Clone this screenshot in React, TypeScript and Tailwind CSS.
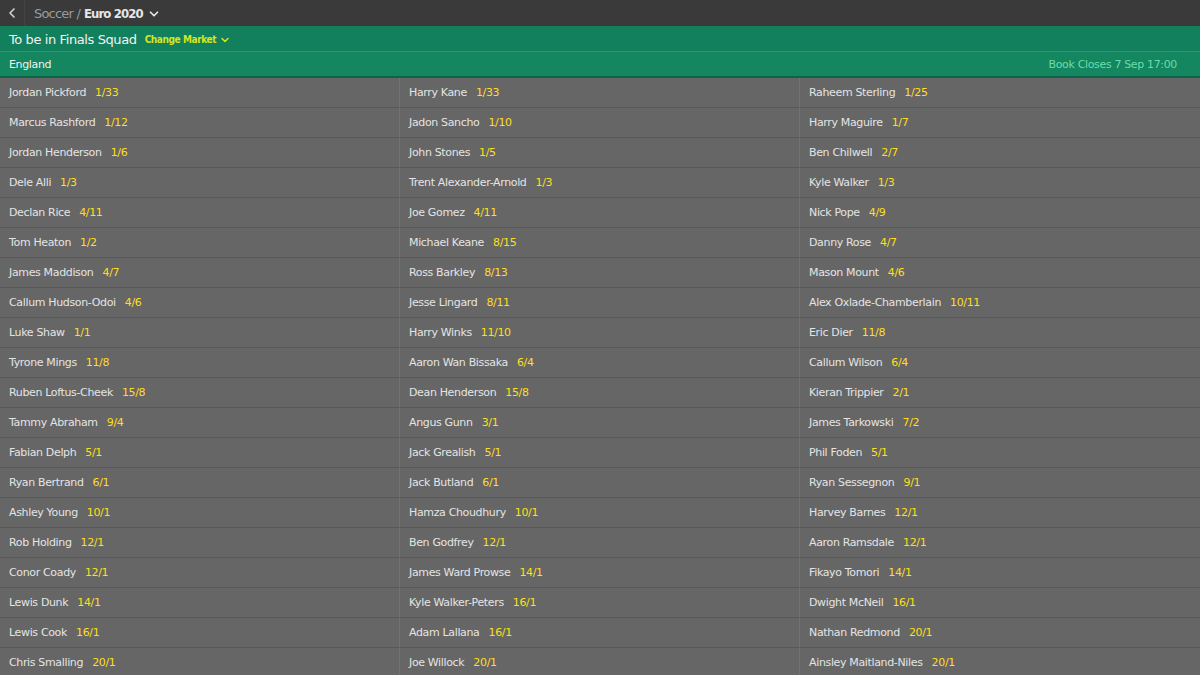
import { ChevronLeft, ChevronDown } from "lucide-react";

const rows: [string, string][][] = [
  [["Jordan Pickford", "1/33"], ["Harry Kane", "1/33"], ["Raheem Sterling", "1/25"]],
  [["Marcus Rashford", "1/12"], ["Jadon Sancho", "1/10"], ["Harry Maguire", "1/7"]],
  [["Jordan Henderson", "1/6"], ["John Stones", "1/5"], ["Ben Chilwell", "2/7"]],
  [["Dele Alli", "1/3"], ["Trent Alexander-Arnold", "1/3"], ["Kyle Walker", "1/3"]],
  [["Declan Rice", "4/11"], ["Joe Gomez", "4/11"], ["Nick Pope", "4/9"]],
  [["Tom Heaton", "1/2"], ["Michael Keane", "8/15"], ["Danny Rose", "4/7"]],
  [["James Maddison", "4/7"], ["Ross Barkley", "8/13"], ["Mason Mount", "4/6"]],
  [["Callum Hudson-Odoi", "4/6"], ["Jesse Lingard", "8/11"], ["Alex Oxlade-Chamberlain", "10/11"]],
  [["Luke Shaw", "1/1"], ["Harry Winks", "11/10"], ["Eric Dier", "11/8"]],
  [["Tyrone Mings", "11/8"], ["Aaron Wan Bissaka", "6/4"], ["Callum Wilson", "6/4"]],
  [["Ruben Loftus-Cheek", "15/8"], ["Dean Henderson", "15/8"], ["Kieran Trippier", "2/1"]],
  [["Tammy Abraham", "9/4"], ["Angus Gunn", "3/1"], ["James Tarkowski", "7/2"]],
  [["Fabian Delph", "5/1"], ["Jack Grealish", "5/1"], ["Phil Foden", "5/1"]],
  [["Ryan Bertrand", "6/1"], ["Jack Butland", "6/1"], ["Ryan Sessegnon", "9/1"]],
  [["Ashley Young", "10/1"], ["Hamza Choudhury", "10/1"], ["Harvey Barnes", "12/1"]],
  [["Rob Holding", "12/1"], ["Ben Godfrey", "12/1"], ["Aaron Ramsdale", "12/1"]],
  [["Conor Coady", "12/1"], ["James Ward Prowse", "14/1"], ["Fikayo Tomori", "14/1"]],
  [["Lewis Dunk", "14/1"], ["Kyle Walker-Peters", "16/1"], ["Dwight McNeil", "16/1"]],
  [["Lewis Cook", "16/1"], ["Adam Lallana", "16/1"], ["Nathan Redmond", "20/1"]],
  [["Chris Smalling", "20/1"], ["Joe Willock", "20/1"], ["Ainsley Maitland-Niles", "20/1"]],
];

const condensed = { fontFamily: "'DejaVu Sans Condensed', 'DejaVu Sans', sans-serif" };

export default function App() {
  return (
    <div
      className="w-[1200px] h-[675px] overflow-hidden bg-[#666666] text-[11px] tracking-[-0.35px]"
      style={{ fontFamily: "'DejaVu Sans', Verdana, sans-serif" }}
    >
      <div className="flex h-[26px] items-center bg-[#3a3a3a]">
        <div className="flex h-full w-[25px] items-center justify-center border-r border-[#444]">
          <ChevronLeft className="h-4 w-4 text-[#cfcfcf]" strokeWidth={2.5} />
        </div>
        <div className="flex items-center pl-[9px] pt-[2px] text-[13px]">
          <span className="tracking-[-0.8px] text-[#9a9a9a]">Soccer /</span>
          <span className="ml-[4px] font-bold tracking-[-0.9px] text-[#e6e6e6]" style={condensed}>
            Euro 2020
          </span>
          <ChevronDown className="ml-[4px] h-3.5 w-3.5 text-[#e6e6e6]" strokeWidth={3} />
        </div>
      </div>
      <div className="flex h-[26px] items-center border-b border-[#2a9a74] bg-[#13805d] pl-[9px] pt-[2px]">
        <span className="text-[13px] tracking-[-0.4px] text-[#f2f2f2]">To be in Finals Squad</span>
        <span
          className="ml-[8px] flex items-center text-[10px] font-bold tracking-[-0.4px] text-[#d4e51e]"
          style={condensed}
        >
          Change Market
          <ChevronDown className="ml-[3px] h-3 w-3" strokeWidth={3} />
        </span>
      </div>
      <div className="flex h-[26px] items-center justify-between border-b-2 border-[#0f6349] bg-[#148660] px-[9px] pt-[2px]">
        <span className="text-[#f2f2f2]">England</span>
        <span className="pr-[14px] text-[#6bdcab]">Book Closes 7 Sep 17:00</span>
      </div>
      <div className="grid grid-cols-3">
        {rows.flat().map(([name, odds], i) => (
          <div
            key={i}
            className={
              "flex h-[30px] items-center border-b border-[#595959] pl-[9px] pt-[2px] " +
              (i % 3 !== 2 ? "border-r border-r-[#727272]" : "")
            }
          >
            <span className="text-[#e4e4e4]">{name}</span>
            <span className="ml-[9px] text-[#ffdf1b]">{odds}</span>
          </div>
        ))}
      </div>
    </div>
  );
}
